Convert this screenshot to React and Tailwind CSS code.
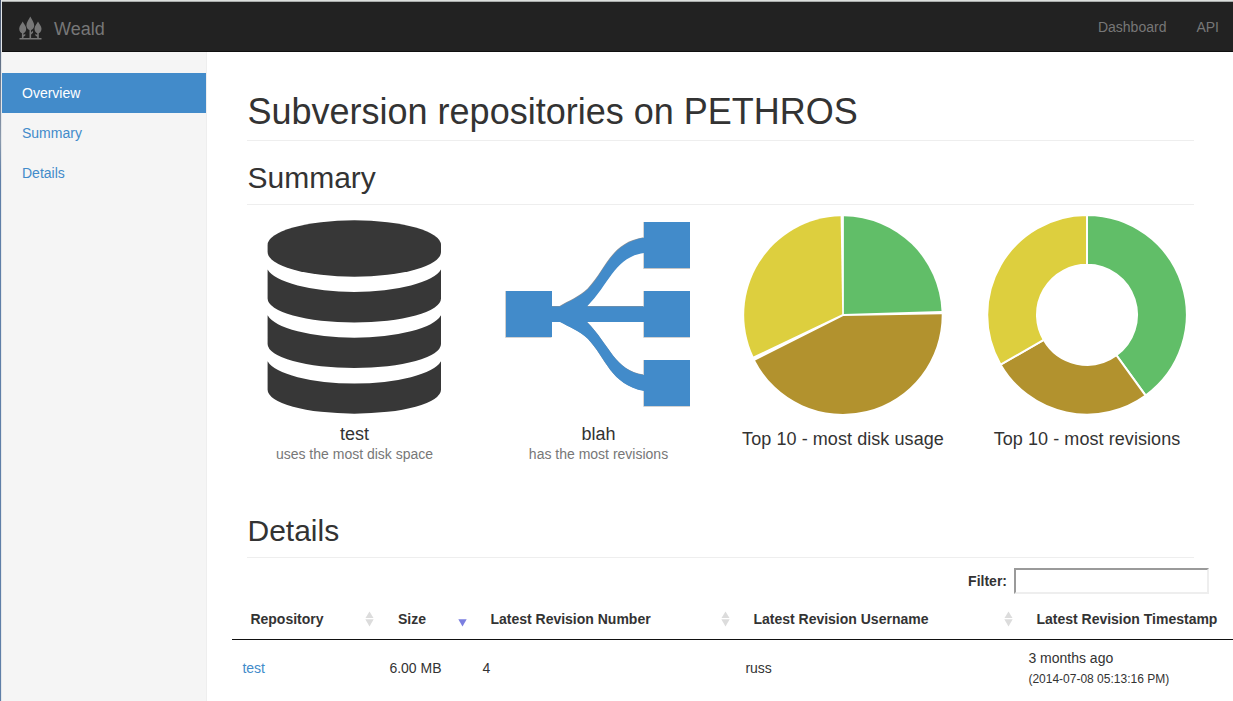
const navItems = [
  { label: 'Overview', active: true },
  { label: 'Summary' },
  { label: 'Details' },
];

function TreesLogo() {
  return (
    <svg width="24" height="25" viewBox="0 0 24 25" fill="#777777" className="shrink-0">
      <path d="M11.3 0.500C12.800 3.200 15.200 6.600 15.200 9.500C15.200 12 13.400 14.200 11.300 14.200S7.400 12 7.400 9.500C7.400 6.600 9.800 3.200 11.300 0.500Z" />
      <path d="M3.700 5.500C4.800 7.600 7.200 10.300 7.200 12.700C7.200 15.200 5.600 17.200 3.700 17.200S0.200 15.200 0.200 12.700C0.200 10.300 2.600 7.600 3.700 5.500Z" />
      <path d="M19 5.500C20.100 7.600 22.500 10.300 22.500 12.700C22.500 15.200 20.900 17.200 19 17.200S15.500 15.200 15.500 12.700C15.500 10.300 17.900 7.600 19 5.500Z" />
      <path d="M10.500 12H12.100V16.500L14 14.800V16.700L12.100 18.400V22H10.500ZM2.900 15H4.500V19L6.300 17.700V19.400L4.500 20.700V22H2.900ZM18.200 15H19.800V22H18.200V20.700L16.400 19.400V17.700L18.200 19ZM0.500 22H22.500V23.500H0.500Z" />
    </svg>
  );
}

function DatabaseIcon() {
  return (
    <svg width="174" height="194" viewBox="267 220 174 194" fill="#373737">
      <path d="M267.600 245A86.700 24.700 0 0 1 441 245V252A86.700 24.700 0 0 1 267.600 252Z" />
      <path d="M267.600 269.500A88 27 0 0 0 441 269.500V298.500A86.700 24 0 0 1 267.600 298.500Z" />
      <path d="M267.600 315.300A88 27 0 0 0 441 315.300V344A86.700 24 0 0 1 267.600 344Z" />
      <path d="M267.600 361.200A88 27 0 0 0 441 361.200V389.700A86.700 24 0 0 1 267.600 389.700Z" />
    </svg>
  );
}

function BranchIcon() {
  return (
    <svg width="186" height="186" viewBox="505 221 186 186" className="overflow-visible">
      <path
        fill="#8f9296"
        transform="translate(-0.400 -0.500)"
        d="M552 306.500H560C569 301 580 297 588 289C606 270 611 243 644 237.800V253C615 257 610 283 587 306.500H644V322H587C610 345 615 371 644 375V391C611 385 606 358 588 339C580 331 569 327 560 322H552Z"
      />
      <path
        fill="#c4c4c4"
        d="M505.200 291H551.500V337.800H505.200ZM643.300 222H690V269H643.300ZM643.300 291H690V337.800H643.300ZM643.300 360H690V406.800H643.300Z"
      />
      <path
        fill="#428bca"
        d="M506 291H552V306.500H560C569 301 580 297 588 289C606 270 611 243 644 237.800V222H690V268H644V253C615 257 610 283 587 306.500H644V291H690V337H644V322H587C610 345 615 371 644 375V360H690V406H644V391C611 385 606 358 588 339C580 331 569 327 560 322H552V337H506Z"
      />
    </svg>
  );
}

function DiskUsagePie() {
  return (
    <svg width="200" height="200" viewBox="743 215 200 200">
      <path fill="#61be68" d="M843.900 216.200A98.800 98.800 0 0 1 941.500 311L843.900 313.900Z" />
      <path fill="#b2922e" d="M941.700 314.200A98.800 98.800 0 0 1 755.100 360.500L843.300 316Z" />
      <path fill="#ddcf3e" d="M753.400 356.600A98.800 98.800 0 0 1 840.600 216.200L842.200 314.200Z" />
    </svg>
  );
}

function RevisionsDonut() {
  return (
    <svg width="200" height="200" viewBox="-100 -99.800 200 200" stroke="#fff" strokeWidth="2">
      <path fill="#61be68" d="M0 -99.800A99.800 99.800 0 0 1 58.660 80.740L29.390 40.450A50 50 0 0 0 0 -50Z" />
      <path fill="#b2922e" d="M58.660 80.740A99.800 99.800 0 0 1 -86.430 49.900L-43.300 25A50 50 0 0 0 29.390 40.450Z" />
      <path fill="#ddcf3e" d="M-86.430 49.900A99.800 99.800 0 0 1 0 -99.800V-50A50 50 0 0 0 -43.300 25Z" />
    </svg>
  );
}

function SortIcon({ desc }) {
  return (
    <svg width="9" height="16" viewBox="0 0 9 16" className="shrink-0">
      {!desc && <path fill="#dcdcdc" d="M4.500 0.500L8.500 7H0.500Z" />}
      <path fill={desc ? '#7b7fe0' : '#dcdcdc'} d="M0.300 8.300H8.700L4.500 15.500Z" />
    </svg>
  );
}

function HeaderCell({ label, width, pad, sort, desc }) {
  return (
    <div className={`flex h-full shrink-0 items-center justify-between whitespace-nowrap pb-[2px] font-bold ${width} ${pad}`}>
      <span>{label}</span>
      {sort && <SortIcon desc={desc} />}
    </div>
  );
}

export default function App() {
  return (
    <div className="flex h-[701px] w-[1233px] overflow-hidden bg-white font-['Liberation_Sans',Arial,sans-serif] text-[14px] leading-5 text-[#333]">
      <div className="w-px shrink-0 bg-linear-to-b from-[#45536b] via-[#8a99ac] via-20% to-[#5f7fa8] to-25%" />
      <div className="w-px shrink-0 bg-[#e4e7ea]" />
      <div className="flex w-[1231px] shrink-0 flex-col">
        <div className="h-px shrink-0 bg-[#dcdfdd]" />
        <div className="h-px shrink-0 bg-[#a9acab]" />
        <header className="flex h-[50px] shrink-0 justify-between border-b border-[#101010] bg-[#222] pl-[17px] pr-[14px] text-[#777]">
          <div className="flex pt-[14px]">
            <TreesLogo />
            <span className="ml-[11px] pt-[3px] text-[18px] leading-5">Weald</span>
          </div>
          <nav className="flex gap-[30px] pt-[15px]">
            <a>Dashboard</a>
            <a>API</a>
          </nav>
        </header>
        <div className="flex min-h-0 flex-1">
          <aside className="w-[205px] shrink-0 border-r border-[#eee] bg-[#f5f5f5] pt-[21px]">
            {navItems.map((n) => (
              <a
                key={n.label}
                className={`flex h-10 items-center pl-5 ${n.active ? 'bg-[#428bca] text-white' : 'text-[#428bca]'}`}
              >
                {n.label}
              </a>
            ))}
          </aside>
          <main className="w-[1026px] shrink-0 overflow-hidden pl-10">
            <h1 className="h-[89px] w-[947px] whitespace-nowrap border-b border-[#eee] pl-[0.5px] pt-10 text-[36px] leading-10">
              Subversion repositories on PETHROS
            </h1>
            <h2 className="h-[64px] w-[947px] border-b border-[#eee] pl-[0.5px] pt-5 text-[30px] leading-[33px]">Summary</h2>
            <section className="flex h-[296px] w-[980px]">
              <div className="flex w-[214px] flex-col items-center pt-[15px]">
                <DatabaseIcon />
                <p className="mt-[10px] pl-px text-[18px] leading-5">test</p>
                <p className="pl-px text-[#777]">uses the most disk space</p>
              </div>
              <div className="ml-[30px] flex w-[214px] flex-col items-center pt-[16px]">
                <BranchIcon />
                <p className="mt-[17px] pl-px text-[18px] leading-5">blah</p>
                <p className="pl-px text-[#777]">has the most revisions</p>
              </div>
              <div className="ml-[30px] flex w-[216px] flex-col items-center pt-[10px]">
                <DiskUsagePie />
                <p className="mt-[14px] whitespace-nowrap text-[18px] leading-5 tracking-[0.07px]">Top 10 - most disk usage</p>
              </div>
              <div className="ml-[28px] flex w-[216px] flex-col items-center pt-[10px]">
                <RevisionsDonut />
                <p className="mt-[14px] whitespace-nowrap text-[18px] leading-5 tracking-[0.07px]">Top 10 - most revisions</p>
              </div>
            </section>
            <h2 className="h-[57px] w-[947px] border-b border-[#eee] pl-[0.5px] pt-[13px] text-[30px] leading-[33px]">Details</h2>
            <div className="flex h-[42px] w-[962px] items-start justify-end pt-[10px]">
              <label className="flex items-center gap-[7px] font-bold">
                Filter:
                <input className="h-[26px] w-[195px] border-2 border-b-[#eee] border-l-[#9a9a9a] border-r-[#eee] border-t-[#9a9a9a] bg-white" />
              </label>
            </div>
            <div className="-ml-[15px] w-[1020px]">
              <div className="flex h-[40px] border-b border-[#111]">
                <HeaderCell label="Repository" width="w-[147px]" pad="pl-[18.400px] pr-[5px]" sort />
                <HeaderCell label="Size" width="w-[93px]" pad="pl-[19px] pr-[5px]" sort desc />
                <HeaderCell label="Latest Revision Number" width="w-[263px]" pad="pl-[18.400px] pr-[5px]" sort />
                <HeaderCell label="Latest Revision Username" width="w-[283px]" pad="pl-[18.400px] pr-[5px]" sort />
                <HeaderCell label="Latest Revision Timestamp" width="w-[234px]" pad="pl-[18.400px]" />
              </div>
              <div className="flex h-[56px] items-center">
                <a className="w-[147px] shrink-0 pl-[10.400px] text-[#428bca]">test</a>
                <span className="w-[93px] shrink-0 pl-[10.400px]">6.00 MB</span>
                <span className="w-[263px] shrink-0 pl-[10.400px]">4</span>
                <span className="w-[283px] shrink-0 pl-[10.400px]">russ</span>
                <span className="w-[234px] shrink-0 pl-[10.400px]">
                  3 months ago
                  <br />
                  <small className="text-[12px] leading-5">(2014-07-08 05:13:16 PM)</small>
                </span>
              </div>
            </div>
          </main>
        </div>
      </div>
    </div>
  );
}
